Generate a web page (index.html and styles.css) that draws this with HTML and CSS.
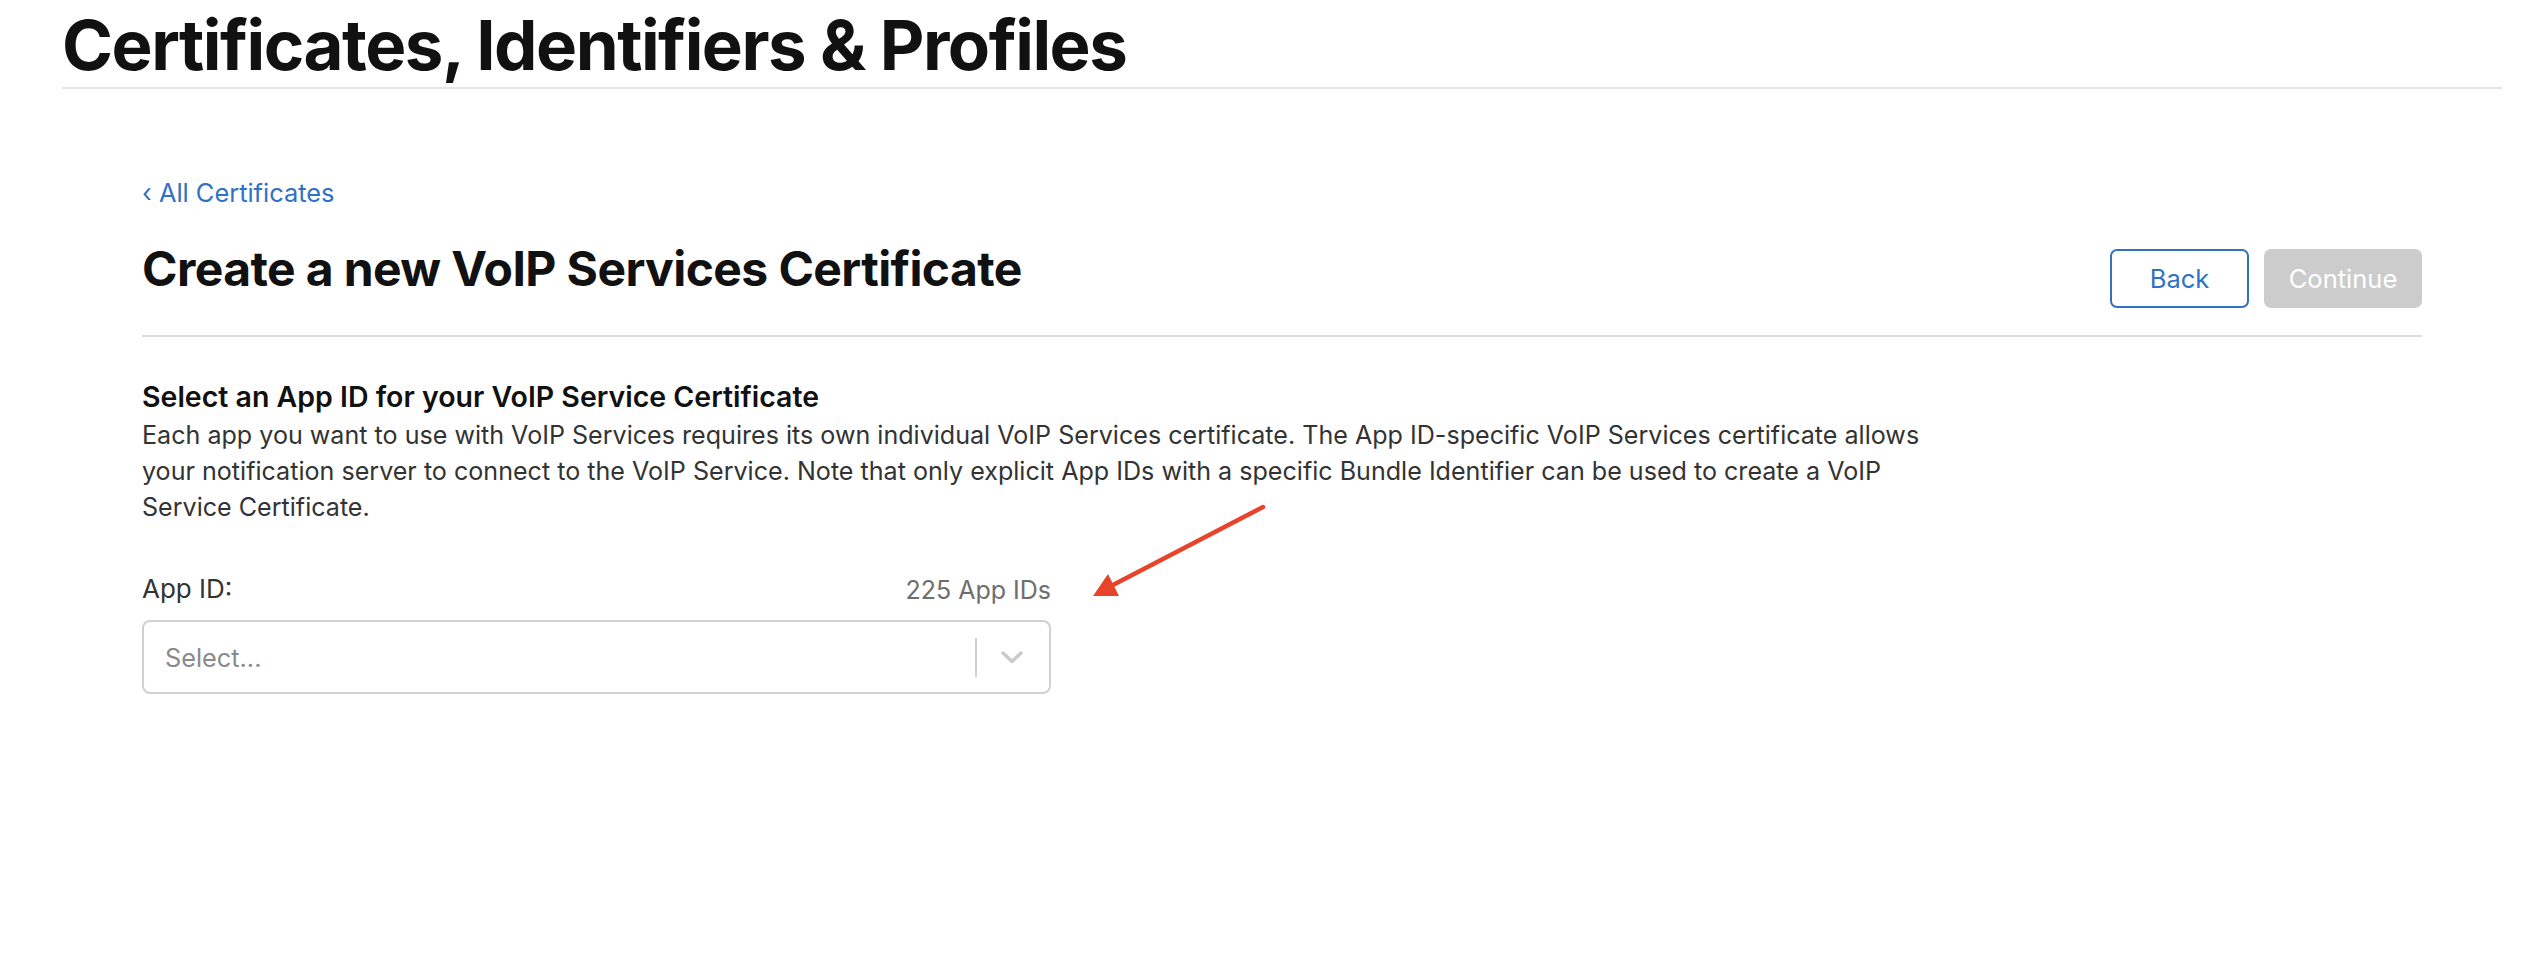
FILE: index.html
```html
<!DOCTYPE html>
<html lang="en">
<head>
<meta charset="utf-8">
<title>Certificates, Identifiers &amp; Profiles</title>
<link rel="stylesheet" href="styles.css">
</head>
<body>
<header class="page-header">
  <h1 class="page-title">Certificates, Identifiers &amp; Profiles</h1>
</header>
<main class="content">
  <a class="back-link" href="#">‹ All Certificates</a>
  <div class="title-row">
    <h2 class="cert-title">Create a new VoIP Services Certificate</h2>
    <div class="actions">
      <button class="btn btn-outline" type="button">Back</button>
      <button class="btn btn-disabled" type="button" disabled>Continue</button>
    </div>
  </div>
  <section class="section">
    <h3 class="section-title">Select an App ID for your VoIP Service Certificate</h3>
    <p class="section-text">Each app you want to use with VoIP Services requires its own individual VoIP Services certificate. The App ID-specific VoIP Services certificate allows your notification server to connect to the VoIP Service. Note that only explicit App IDs with a specific Bundle Identifier can be used to create a VoIP Service Certificate.</p>
    <div class="field">
      <div class="field-head">
        <label class="field-label">App ID:</label>
        <span class="field-count">225 App IDs</span>
      </div>
      <div class="select">
        <span class="select-placeholder">Select...</span>
        <span class="select-sep"></span>
        <svg class="select-chevron" width="22" height="13" viewBox="0 0 22 13"><polyline points="2,2 11,10.5 20,2" fill="none" stroke="#cccccc" stroke-width="3.5" stroke-linecap="round" stroke-linejoin="round"/></svg>
      </div>
    </div>
  </section>
</main>
<svg class="annotation-arrow" width="190" height="105" viewBox="0 0 190 105">
  <line x1="178" y1="7" x2="26" y2="86" stroke="#e8442b" stroke-width="4.5" stroke-linecap="round"/>
  <polygon points="8,96 23,74 34,96" fill="#e8442b"/>
</svg>
</body>
</html>
```
FILE: styles.css
```css
html, body {
  margin: 0;
  padding: 0;
  background: #ffffff;
}
body {
  font-family: Inter, "Noto Sans", "Liberation Sans", sans-serif;
  color: #111111;
  position: relative;
  min-height: 958px;
}
.page-header {
  margin: 0 30px 0 62px;
  padding-top: 3px;
  border-bottom: 2px solid #e5e5e5;
}
.page-title {
  margin: 0;
  font-size: 69px;
  line-height: 84px;
  font-weight: 700;
  letter-spacing: -1.5px;
  color: #111111;
}
.content {
  padding: 0 110px 0 142px;
  display: flex;
  flex-direction: column;
}
.back-link {
  margin-top: 89px;
  align-self: flex-start;
  font-size: 25.4px;
  line-height: 30px;
  color: #3071c5;
  text-decoration: none;
}
.title-row {
  margin-top: 33px;
  display: flex;
  justify-content: space-between;
  align-items: flex-start;
  padding-bottom: 27px;
  border-bottom: 2px solid #dddddd;
}
.cert-title {
  margin: 0;
  font-size: 48px;
  line-height: 56px;
  font-weight: 700;
  letter-spacing: -0.6px;
  color: #111111;
}
.actions {
  margin-top: 8px;
  display: flex;
  gap: 15px;
}
.btn {
  height: 59px;
  border-radius: 7px;
  font-family: inherit;
  font-size: 25.5px;
  padding: 0;
}
.btn-outline {
  width: 139px;
  background: #ffffff;
  border: 2px solid #3071c5;
  color: #3071c5;
}
.btn-disabled {
  width: 158px;
  background: #cccccc;
  border: 0;
  color: #ffffff;
}
.section {
  margin-top: 42px;
}
.section-title {
  margin: 0;
  font-size: 28.5px;
  line-height: 36px;
  font-weight: 600;
  color: #111111;
}
.section-text {
  margin: 2px 0 0;
  max-width: 1815px;
  font-size: 25.1px;
  line-height: 36px;
  color: #333333;
}
.field {
  width: 909px;
  margin-top: 49px;
}
.field-head {
  display: flex;
  justify-content: space-between;
  align-items: flex-end;
}
.field-label {
  font-size: 26px;
  line-height: 30px;
  color: #333333;
}
.field-count {
  font-size: 25px;
  line-height: 27px;
  color: #6e6e6e;
}
.select {
  margin-top: 16px;
  height: 74px;
  box-sizing: border-box;
  border: 2px solid #d0d0d0;
  border-radius: 8px;
  display: flex;
  align-items: center;
  padding: 0 26px 0 21px;
}
.select-placeholder {
  flex: 1;
  font-size: 25.3px;
  color: #8a8a8a;
}
.select-sep {
  width: 2px;
  height: 39px;
  background: #d0d0d0;
  margin-right: 24px;
}
.select-chevron {
  display: block;
}
.annotation-arrow {
  position: absolute;
  left: 1085px;
  top: 500px;
}
```
